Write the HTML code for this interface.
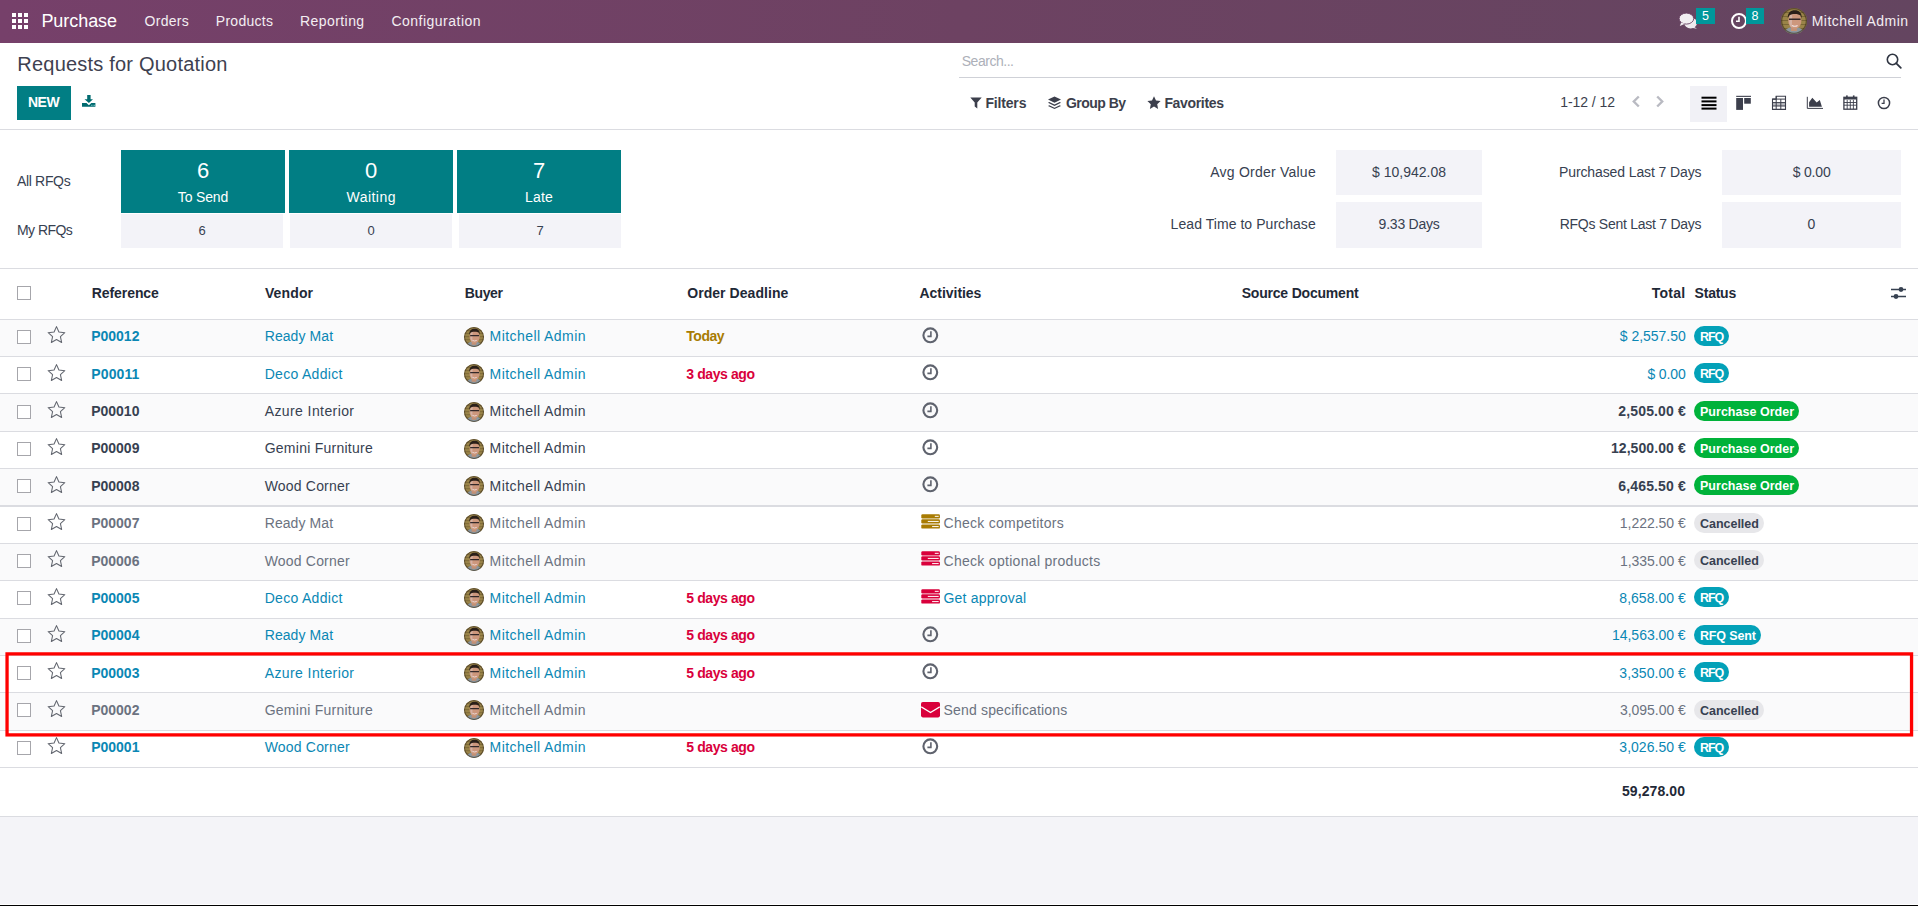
<!DOCTYPE html>
<html><head><meta charset="utf-8"><title>Requests for Quotation</title>
<style>
html,body{margin:0;padding:0;}
body{width:1918px;height:906px;overflow:hidden;position:relative;background:#fff;font-family:"Liberation Sans",sans-serif;}
.t{position:absolute;white-space:nowrap;}
.r{position:absolute;display:block;}
</style></head><body>
<svg width="0" height="0" style="position:absolute">
<defs>
<symbol id="av" viewBox="0 0 26 26">
<clipPath id="avc"><circle cx="13" cy="13" r="13"/></clipPath>
<g clip-path="url(#avc)">
<rect width="26" height="26" fill="#9a8448"/>
<path d="M0 4.5h26M0 8.5h26M0 12.5h26M0 16.5h26M0 20.5h26" stroke="#7b6736" stroke-width="1.1"/>
<path d="M3 26c1-5 4-7 10-7s9 2 10 7z" fill="#8b97a0"/>
<path d="M10 19h6v4h-6z" fill="#c39075"/>
<ellipse cx="13.8" cy="12.6" rx="6.6" ry="8.2" fill="#cd977d"/>
<path d="M8.6 8c0.8-1.5 2-1.8 2.6-1.6l-0.4 13c-1.6-1-2.5-3-2.4-5.5z" fill="#e2d2d4" opacity="0.45"/>
<path d="M6.8 10.2C6.6 4.5 9.8 2.2 13.8 2.2S21 4.5 20.8 10.5L19.6 7.6C17.8 5.6 9.8 5.4 8 7.8z" fill="#2a1f19"/>
<path d="M8 11.2h11.6" stroke="#33282a" stroke-width="1.5"/>
<path d="M11 17.4q2.8 1.6 5.6 0" stroke="#f0e2e2" stroke-width="1.1" fill="none"/>
<circle cx="13" cy="13" r="12.5" fill="none" stroke="#3a2e1e" stroke-width="1.6" opacity="0.6"/>
</g>
</symbol>
</defs></svg>
<div class="r" style="left:0px;top:0px;width:1918px;height:43px;background:linear-gradient(90deg,#76406a 0%,#6d4262 50%,#644560 100%);"></div>
<div class="r" style="left:12px;top:13px;width:4px;height:4px;background:#fff;"></div>
<div class="r" style="left:12px;top:19px;width:4px;height:4px;background:#fff;"></div>
<div class="r" style="left:12px;top:25px;width:4px;height:4px;background:#fff;"></div>
<div class="r" style="left:18px;top:13px;width:4px;height:4px;background:#fff;"></div>
<div class="r" style="left:18px;top:19px;width:4px;height:4px;background:#fff;"></div>
<div class="r" style="left:18px;top:25px;width:4px;height:4px;background:#fff;"></div>
<div class="r" style="left:24px;top:13px;width:4px;height:4px;background:#fff;"></div>
<div class="r" style="left:24px;top:19px;width:4px;height:4px;background:#fff;"></div>
<div class="r" style="left:24px;top:25px;width:4px;height:4px;background:#fff;"></div>
<div class="t" style="top:10px;font-size:18px;line-height:23px;color:#fff;letter-spacing:-0.057px;left:41.40px;">Purchase</div>
<div class="t" style="top:12px;font-size:14px;line-height:18px;color:#f3eef2;letter-spacing:0.250px;left:144.60px;">Orders</div>
<div class="t" style="top:12px;font-size:14px;line-height:18px;color:#f3eef2;letter-spacing:0.279px;left:215.80px;">Products</div>
<div class="t" style="top:12px;font-size:14px;line-height:18px;color:#f3eef2;letter-spacing:0.444px;left:299.90px;">Reporting</div>
<div class="t" style="top:12px;font-size:14px;line-height:18px;color:#f3eef2;letter-spacing:0.496px;left:391.40px;">Configuration</div>
<svg class="r" style="left:1678px;top:12px;" width="20" height="18" viewBox="0 0 20 18"><ellipse cx="12.6" cy="11" rx="6.4" ry="5.4" fill="#eeeaee"/><path d="M15.5 14.5L19 16.8 13.5 15.8z" fill="#eeeaee"/><ellipse cx="8.4" cy="6.6" rx="7.3" ry="5.5" fill="#f1eef1" stroke="#694262" stroke-width="0.9"/><path d="M3.2 10.6L1.8 14 7 11.8z" fill="#f1eef1"/></svg>
<div class="r" style="left:1696px;top:8px;width:19px;height:16px;background:#00979b;"></div>
<div class="t" style="top:8px;font-size:12.5px;line-height:16px;color:#fff;left:1405.50px;width:600px;text-align:center;">5</div>
<svg class="r" style="left:1730px;top:12px;" width="18" height="18" viewBox="0 0 18 18"><circle cx="9" cy="9" r="7" fill="none" stroke="#fff" stroke-width="2"/><path d="M9 4.8V9.3H6" fill="none" stroke="#fff" stroke-width="1.6"/></svg>
<div class="r" style="left:1746px;top:8px;width:18px;height:16px;background:#00979b;"></div>
<div class="t" style="top:8px;font-size:12.5px;line-height:16px;color:#fff;left:1455.00px;width:600px;text-align:center;">8</div>
<svg class="r" style="left:1781px;top:8px" width="26" height="26" viewBox="0 0 26 26"><use href="#av"/></svg>
<div class="t" style="top:12px;font-size:14px;line-height:18px;color:#f3eef2;letter-spacing:0.465px;left:1811.70px;">Mitchell Admin</div>
<div class="t" style="top:51px;font-size:20px;line-height:26px;color:#3e4150;letter-spacing:0.213px;left:17.30px;">Requests for Quotation</div>
<div class="r" style="left:17px;top:86px;width:54px;height:34px;background:#017e84;"></div>
<div class="t" style="top:93px;font-size:14px;line-height:18px;color:#fff;font-weight:700;letter-spacing:-0.525px;left:28.00px;">NEW</div>
<svg class="r" style="left:82px;top:95px;" width="14" height="13" viewBox="0 0 14 13"><path d="M5.2 0h3.4v4.2H11L6.9 8.1 2.5 4.2h2.7z" fill="#016b70"/><path d="M0 8.1h4.5L6.9 10.2 9.3 8.1H13.4V11.7H0z" fill="#016b70"/><rect x="9.2" y="9.8" width="0.9" height="1" fill="#8cc"/><rect x="10.6" y="9.8" width="0.9" height="1" fill="#8cc"/><rect x="12" y="9.8" width="0.9" height="1" fill="#8cc"/></svg>
<div class="t" style="top:52px;font-size:14px;line-height:18px;color:#adb0b9;letter-spacing:-0.463px;left:961.70px;">Search...</div>
<div class="r" style="left:959px;top:77px;width:942px;height:1px;background:#cfd1d7;"></div>
<svg class="r" style="left:1886px;top:53px;" width="16" height="16" viewBox="0 0 16 16"><circle cx="6.5" cy="6.5" r="5.2" fill="none" stroke="#2f3542" stroke-width="1.6"/><path d="M10.3 10.3L14.8 14.8" stroke="#2f3542" stroke-width="1.8" stroke-linecap="round"/></svg>
<svg class="r" style="left:970px;top:97px;" width="12" height="12" viewBox="0 0 12 12"><path d="M0.3 0.5h11.4L7.3 5.5V11.5L4.7 9.6V5.5z" fill="#3c3f4c"/></svg>
<div class="t" style="top:94px;font-size:14px;line-height:18px;color:#3c3f4c;font-weight:700;letter-spacing:-0.183px;left:985.50px;">Filters</div>
<svg class="r" style="left:1047px;top:96px;" width="15" height="14" viewBox="0 0 15 14"><path d="M7.5 0.5L14 3.6 7.5 6.7 1 3.6z" fill="#3c3f4c"/><path d="M2.3 6.1L7.5 8.6l5.2-2.5L14 6.8 7.5 9.9 1 6.8z" fill="#3c3f4c"/><path d="M2.3 9.3L7.5 11.8l5.2-2.5L14 10 7.5 13.1 1 10z" fill="#3c3f4c"/></svg>
<div class="t" style="top:94px;font-size:14px;line-height:18px;color:#3c3f4c;font-weight:700;letter-spacing:-0.536px;left:1066.00px;">Group By</div>
<svg class="r" style="left:1147px;top:96px;" width="14" height="13" viewBox="0 0 14 13"><path d="M7 0.3l2 4.2 4.6.6-3.4 3.2.9 4.6L7 10.6l-4.1 2.3.9-4.6L.4 5.1 5 4.5z" fill="#3c3f4c"/></svg>
<div class="t" style="top:94px;font-size:14px;line-height:18px;color:#3c3f4c;font-weight:700;letter-spacing:-0.331px;left:1164.40px;">Favorites</div>
<div class="t" style="top:93px;font-size:14px;line-height:18px;color:#3c3f4c;letter-spacing:-0.069px;left:1560.30px;">1-12 / 12</div>
<svg class="r" style="left:1631px;top:95px;" width="10" height="13" viewBox="0 0 10 13"><path d="M7.8 1.5L2.8 6.5l5 5" fill="none" stroke="#b9bac2" stroke-width="2.4"/></svg>
<svg class="r" style="left:1655px;top:95px;" width="10" height="13" viewBox="0 0 10 13"><path d="M2.2 1.5l5 5-5 5" fill="none" stroke="#b9bac2" stroke-width="2.4"/></svg>
<div class="r" style="left:1690px;top:86px;width:37px;height:36px;background:#f1f1f6;"></div>
<svg class="r" style="left:1701px;top:96px;" width="16" height="14" viewBox="0 0 16 14"><rect x="0.5" y="0.7" width="15" height="2" fill="#000"/><rect x="0.5" y="4.4" width="15" height="2" fill="#000"/><rect x="0.5" y="8.1" width="15" height="2" fill="#000"/><rect x="0.5" y="11.6" width="15" height="2" fill="#000"/></svg>
<svg class="r" style="left:1736px;top:95px;" width="16" height="15" viewBox="0 0 16 15"><rect x="0.2" y="0.8" width="14.8" height="1.1" fill="#3c3f4c"/><rect x="0.2" y="3" width="6.8" height="11.9" fill="#3c3f4c"/><rect x="8.2" y="3" width="6.6" height="5.7" fill="#3c3f4c"/></svg>
<svg class="r" style="left:1771px;top:95px;" width="16" height="15" viewBox="0 0 16 15"><path d="M1.5 4.1H5.2V1.3H14.5V14.4H1.5Z" fill="none" stroke="#3c3f4c" stroke-width="1.1"/><path d="M1.5 4.1H14.5M1.5 7.6H14.5M1.5 11H14.5M5.2 1.3V14.4M9.8 4.1V14.4" stroke="#3c3f4c" stroke-width="1"/><rect x="1.5" y="7.6" width="13" height="3.4" fill="#3c3f4c" opacity="0.35"/></svg>
<svg class="r" style="left:1806px;top:95px;" width="18" height="15" viewBox="0 0 18 15"><path d="M1.3 1.8V13.4H17" fill="none" stroke="#3c3f4c" stroke-width="1"/><path d="M3.1 11.7V7.3L6.3 2.8 10.7 7.5 13.8 4.9 15.9 11.7Z" fill="#3c3f4c"/></svg>
<svg class="r" style="left:1843px;top:95px;" width="15" height="15" viewBox="0 0 15 15"><rect x="0.9" y="2.3" width="12.8" height="11.9" fill="none" stroke="#3c3f4c" stroke-width="1.3"/><rect x="0.9" y="2.3" width="12.8" height="2.2" fill="#3c3f4c"/><path d="M0.9 7.5h12.8M0.9 10.2h12.8M4.2 4.9v9.3M7.3 4.9v9.3M10.4 4.9v9.3" stroke="#3c3f4c" stroke-width="0.9"/><rect x="3.1" y="0.4" width="1.6" height="3.2" fill="#3c3f4c"/><rect x="9.9" y="0.4" width="1.6" height="3.2" fill="#3c3f4c"/></svg>
<svg class="r" style="left:1877px;top:96px;" width="14" height="14" viewBox="0 0 14 14"><circle cx="7" cy="7" r="5.6" fill="none" stroke="#3c3f4c" stroke-width="1.5"/><path d="M7 3.6V7.4H4.6" fill="none" stroke="#3c3f4c" stroke-width="1.3"/></svg>
<div class="r" style="left:0px;top:129px;width:1918px;height:1px;background:#dbdce1;"></div>
<div class="t" style="top:172px;font-size:14px;line-height:18px;color:#374151;letter-spacing:-0.314px;left:16.90px;">All RFQs</div>
<div class="t" style="top:221px;font-size:14px;line-height:18px;color:#374151;letter-spacing:-0.521px;left:16.90px;">My RFQs</div>
<div class="r" style="left:121px;top:150px;width:164px;height:63px;background:#017e84;"></div>
<div class="t" style="top:156px;font-size:22px;line-height:29px;color:#fff;left:-97.00px;width:600px;text-align:center;">6</div>
<div class="t" style="top:188px;font-size:14px;line-height:18px;color:#fff;letter-spacing:-0.163px;left:177.80px;">To Send</div>
<div class="r" style="left:121px;top:214px;width:162px;height:34px;background:#f3f3f8;"></div>
<div class="t" style="top:222px;font-size:13px;line-height:17px;color:#374151;left:-98.00px;width:600px;text-align:center;">6</div>
<div class="r" style="left:289px;top:150px;width:164px;height:63px;background:#017e84;"></div>
<div class="t" style="top:156px;font-size:22px;line-height:29px;color:#fff;left:71.00px;width:600px;text-align:center;">0</div>
<div class="t" style="top:188px;font-size:14px;line-height:18px;color:#fff;letter-spacing:0.446px;left:346.60px;">Waiting</div>
<div class="r" style="left:290px;top:214px;width:162px;height:34px;background:#f3f3f8;"></div>
<div class="t" style="top:222px;font-size:13px;line-height:17px;color:#374151;left:71.00px;width:600px;text-align:center;">0</div>
<div class="r" style="left:457px;top:150px;width:164px;height:63px;background:#017e84;"></div>
<div class="t" style="top:156px;font-size:22px;line-height:29px;color:#fff;left:239.00px;width:600px;text-align:center;">7</div>
<div class="t" style="top:188px;font-size:14px;line-height:18px;color:#fff;letter-spacing:0.183px;left:525.10px;">Late</div>
<div class="r" style="left:459px;top:214px;width:162px;height:34px;background:#f3f3f8;"></div>
<div class="t" style="top:222px;font-size:13px;line-height:17px;color:#374151;left:240.00px;width:600px;text-align:center;">7</div>
<div class="t" style="top:163px;font-size:14px;line-height:18px;color:#374151;letter-spacing:0.232px;right:602.10px;text-align:right;">Avg Order Value</div>
<div class="t" style="top:215px;font-size:14px;line-height:18px;color:#374151;letter-spacing:0.055px;right:602.26px;text-align:right;">Lead Time to Purchase</div>
<div class="r" style="left:1336px;top:150px;width:146px;height:45px;background:#f3f3f8;"></div>
<div class="r" style="left:1336px;top:202px;width:146px;height:46px;background:#f3f3f8;"></div>
<div class="t" style="top:163px;font-size:14px;line-height:18px;color:#374151;letter-spacing:0.000px;left:1372.00px;">$ 10,942.08</div>
<div class="t" style="top:215px;font-size:14px;line-height:18px;color:#374151;letter-spacing:-0.225px;left:1378.60px;">9.33 Days</div>
<div class="t" style="top:163px;font-size:14px;line-height:18px;color:#374151;letter-spacing:-0.108px;right:216.50px;text-align:right;">Purchased Last 7 Days</div>
<div class="t" style="top:215px;font-size:14px;line-height:18px;color:#374151;letter-spacing:-0.261px;right:216.72px;text-align:right;">RFQs Sent Last 7 Days</div>
<div class="r" style="left:1722px;top:150px;width:179px;height:45px;background:#f3f3f8;"></div>
<div class="r" style="left:1722px;top:202px;width:179px;height:46px;background:#f3f3f8;"></div>
<div class="t" style="top:163px;font-size:14px;line-height:18px;color:#374151;letter-spacing:-0.175px;left:1792.70px;">$ 0.00</div>
<div class="t" style="top:215px;font-size:14px;line-height:18px;color:#374151;left:1511.50px;width:600px;text-align:center;">0</div>
<div class="r" style="left:0px;top:268px;width:1918px;height:1px;background:#dbdce1;"></div>
<div class="r" style="left:17px;top:286px;width:14px;height:14px;background:#fff;box-sizing:border-box;border:1px solid #a6a6ab;"></div>
<div class="t" style="top:284px;font-size:14px;line-height:18px;color:#1f2937;font-weight:700;letter-spacing:-0.081px;left:91.80px;">Reference</div>
<div class="t" style="top:284px;font-size:14px;line-height:18px;color:#1f2937;font-weight:700;letter-spacing:0.140px;left:264.90px;">Vendor</div>
<div class="t" style="top:284px;font-size:14px;line-height:18px;color:#1f2937;font-weight:700;letter-spacing:-0.412px;left:464.80px;">Buyer</div>
<div class="t" style="top:284px;font-size:14px;line-height:18px;color:#1f2937;font-weight:700;letter-spacing:0.063px;left:687.20px;">Order Deadline</div>
<div class="t" style="top:284px;font-size:14px;line-height:18px;color:#1f2937;font-weight:700;letter-spacing:-0.039px;left:919.50px;">Activities</div>
<div class="t" style="top:284px;font-size:14px;line-height:18px;color:#1f2937;font-weight:700;letter-spacing:-0.198px;left:1241.70px;">Source Document</div>
<div class="t" style="top:284px;font-size:14px;line-height:18px;color:#1f2937;font-weight:700;letter-spacing:-0.230px;left:1694.60px;">Status</div>
<div class="t" style="top:284px;font-size:14px;line-height:18px;color:#1f2937;font-weight:700;letter-spacing:0.206px;right:232.76px;text-align:right;">Total</div>
<svg class="r" style="left:1890px;top:286px;" width="17" height="14" viewBox="0 0 17 14"><path d="M1 3.5h15M1 10.5h15" stroke="#374151" stroke-width="1.3"/><circle cx="11" cy="3.5" r="2.4" fill="#374151"/><circle cx="6" cy="10.5" r="2.4" fill="#374151"/></svg>
<div class="r" style="left:0px;top:319px;width:1918px;height:1px;background:#dbdce1;"></div>
<div class="r" style="left:0px;top:320px;width:1918px;height:36px;background:#fafafb;"></div>
<div class="r" style="left:0px;top:356px;width:1918px;height:1px;background:#dbdce1;"></div>
<div class="r" style="left:17px;top:330px;width:14px;height:14px;background:#fff;box-sizing:border-box;border:1px solid #a6a6ab;"></div>
<svg class="r" style="left:46.5px;top:326px;" width="19" height="18" viewBox="0 0 19 18"><polygon points="9.50,0.60 11.92,6.02 17.82,6.65 13.41,10.62 14.64,16.43 9.50,13.46 4.36,16.43 5.59,10.62 1.18,6.65 7.08,6.02" fill="none" stroke="#62666f" stroke-width="1.05" stroke-linejoin="round"/></svg>
<div class="t" style="top:327px;font-size:14px;line-height:18px;color:#0a87b4;font-weight:700;letter-spacing:-0.030px;left:91.30px;">P00012</div>
<div class="t" style="top:327px;font-size:14px;line-height:18px;color:#0a87b4;letter-spacing:0.081px;left:264.70px;">Ready Mat</div>
<svg class="r" style="left:464px;top:327px" width="20" height="20" viewBox="0 0 26 26"><use href="#av"/></svg>
<div class="t" style="top:327px;font-size:14px;line-height:18px;color:#0a87b4;letter-spacing:0.435px;left:489.60px;">Mitchell Admin</div>
<div class="t" style="top:327px;font-size:14px;line-height:18px;color:#a87b02;font-weight:700;letter-spacing:-0.463px;left:686.30px;">Today</div>
<svg class="r" style="left:922.2px;top:327px;" width="17" height="17" viewBox="0 0 17 17"><circle cx="8.3" cy="8.3" r="6.9" fill="none" stroke="#5f636e" stroke-width="2.1"/><path d="M8.9 4.3V9.4H5.4" fill="none" stroke="#5f636e" stroke-width="1.6"/></svg>
<div class="t" style="top:327px;font-size:14px;line-height:18px;color:#0a87b4;letter-spacing:-0.025px;right:232.27px;text-align:right;">$ 2,557.50</div>
<div class="r" style="left:1694px;top:326px;width:35px;height:20px;background:#03a1b8;border-radius:10px;"></div>
<div class="t" style="top:329px;font-size:12.5px;line-height:16px;color:#fff;font-weight:700;letter-spacing:-1.088px;left:1700.00px;">RFQ</div>
<div class="r" style="left:0px;top:393px;width:1918px;height:1px;background:#dbdce1;"></div>
<div class="r" style="left:17px;top:367px;width:14px;height:14px;background:#fff;box-sizing:border-box;border:1px solid #a6a6ab;"></div>
<svg class="r" style="left:46.5px;top:364px;" width="19" height="18" viewBox="0 0 19 18"><polygon points="9.50,0.60 11.92,6.02 17.82,6.65 13.41,10.62 14.64,16.43 9.50,13.46 4.36,16.43 5.59,10.62 1.18,6.65 7.08,6.02" fill="none" stroke="#62666f" stroke-width="1.05" stroke-linejoin="round"/></svg>
<div class="t" style="top:365px;font-size:14px;line-height:18px;color:#0a87b4;font-weight:700;letter-spacing:0.120px;left:91.30px;">P00011</div>
<div class="t" style="top:365px;font-size:14px;line-height:18px;color:#0a87b4;letter-spacing:0.295px;left:264.70px;">Deco Addict</div>
<svg class="r" style="left:464px;top:364px" width="20" height="20" viewBox="0 0 26 26"><use href="#av"/></svg>
<div class="t" style="top:365px;font-size:14px;line-height:18px;color:#0a87b4;letter-spacing:0.435px;left:489.60px;">Mitchell Admin</div>
<div class="t" style="top:365px;font-size:14px;line-height:18px;color:#d9003b;font-weight:700;letter-spacing:-0.408px;left:686.30px;">3 days ago</div>
<svg class="r" style="left:922.2px;top:364px;" width="17" height="17" viewBox="0 0 17 17"><circle cx="8.3" cy="8.3" r="6.9" fill="none" stroke="#5f636e" stroke-width="2.1"/><path d="M8.9 4.3V9.4H5.4" fill="none" stroke="#5f636e" stroke-width="1.6"/></svg>
<div class="t" style="top:365px;font-size:14px;line-height:18px;color:#0a87b4;letter-spacing:-0.115px;right:232.36px;text-align:right;">$ 0.00</div>
<div class="r" style="left:1694px;top:363px;width:35px;height:20px;background:#03a1b8;border-radius:10px;"></div>
<div class="t" style="top:366px;font-size:12.5px;line-height:16px;color:#fff;font-weight:700;letter-spacing:-1.088px;left:1700.00px;">RFQ</div>
<div class="r" style="left:0px;top:394px;width:1918px;height:37px;background:#fafafb;"></div>
<div class="r" style="left:0px;top:431px;width:1918px;height:1px;background:#dbdce1;"></div>
<div class="r" style="left:17px;top:405px;width:14px;height:14px;background:#fff;box-sizing:border-box;border:1px solid #a6a6ab;"></div>
<svg class="r" style="left:46.5px;top:401px;" width="19" height="18" viewBox="0 0 19 18"><polygon points="9.50,0.60 11.92,6.02 17.82,6.65 13.41,10.62 14.64,16.43 9.50,13.46 4.36,16.43 5.59,10.62 1.18,6.65 7.08,6.02" fill="none" stroke="#62666f" stroke-width="1.05" stroke-linejoin="round"/></svg>
<div class="t" style="top:402px;font-size:14px;line-height:18px;color:#374151;font-weight:700;letter-spacing:-0.030px;left:91.30px;">P00010</div>
<div class="t" style="top:402px;font-size:14px;line-height:18px;color:#374151;letter-spacing:0.408px;left:264.70px;">Azure Interior</div>
<svg class="r" style="left:464px;top:402px" width="20" height="20" viewBox="0 0 26 26"><use href="#av"/></svg>
<div class="t" style="top:402px;font-size:14px;line-height:18px;color:#374151;letter-spacing:0.435px;left:489.60px;">Mitchell Admin</div>
<svg class="r" style="left:922.2px;top:402px;" width="17" height="17" viewBox="0 0 17 17"><circle cx="8.3" cy="8.3" r="6.9" fill="none" stroke="#5f636e" stroke-width="2.1"/><path d="M8.9 4.3V9.4H5.4" fill="none" stroke="#5f636e" stroke-width="1.6"/></svg>
<div class="t" style="top:402px;font-size:14px;line-height:18px;color:#374151;font-weight:700;letter-spacing:0.142px;right:232.10px;text-align:right;">2,505.00 €</div>
<div class="r" style="left:1694px;top:401px;width:105px;height:20px;background:#00b23a;border-radius:10px;"></div>
<div class="t" style="top:404px;font-size:12.5px;line-height:16px;color:#fff;font-weight:700;letter-spacing:0.019px;left:1700.00px;">Purchase Order</div>
<div class="r" style="left:0px;top:468px;width:1918px;height:1px;background:#dbdce1;"></div>
<div class="r" style="left:17px;top:442px;width:14px;height:14px;background:#fff;box-sizing:border-box;border:1px solid #a6a6ab;"></div>
<svg class="r" style="left:46.5px;top:438px;" width="19" height="18" viewBox="0 0 19 18"><polygon points="9.50,0.60 11.92,6.02 17.82,6.65 13.41,10.62 14.64,16.43 9.50,13.46 4.36,16.43 5.59,10.62 1.18,6.65 7.08,6.02" fill="none" stroke="#62666f" stroke-width="1.05" stroke-linejoin="round"/></svg>
<div class="t" style="top:439px;font-size:14px;line-height:18px;color:#374151;font-weight:700;letter-spacing:-0.030px;left:91.30px;">P00009</div>
<div class="t" style="top:439px;font-size:14px;line-height:18px;color:#374151;letter-spacing:0.250px;left:264.70px;">Gemini Furniture</div>
<svg class="r" style="left:464px;top:439px" width="20" height="20" viewBox="0 0 26 26"><use href="#av"/></svg>
<div class="t" style="top:439px;font-size:14px;line-height:18px;color:#374151;letter-spacing:0.435px;left:489.60px;">Mitchell Admin</div>
<svg class="r" style="left:922.2px;top:439px;" width="17" height="17" viewBox="0 0 17 17"><circle cx="8.3" cy="8.3" r="6.9" fill="none" stroke="#5f636e" stroke-width="2.1"/><path d="M8.9 4.3V9.4H5.4" fill="none" stroke="#5f636e" stroke-width="1.6"/></svg>
<div class="t" style="top:439px;font-size:14px;line-height:18px;color:#374151;font-weight:700;letter-spacing:0.080px;right:232.25px;text-align:right;">12,500.00 €</div>
<div class="r" style="left:1694px;top:438px;width:105px;height:20px;background:#00b23a;border-radius:10px;"></div>
<div class="t" style="top:441px;font-size:12.5px;line-height:16px;color:#fff;font-weight:700;letter-spacing:0.019px;left:1700.00px;">Purchase Order</div>
<div class="r" style="left:0px;top:469px;width:1918px;height:36px;background:#fafafb;"></div>
<div class="r" style="left:0px;top:505px;width:1918px;height:2px;background:#dbdce1;"></div>
<div class="r" style="left:17px;top:479px;width:14px;height:14px;background:#fff;box-sizing:border-box;border:1px solid #a6a6ab;"></div>
<svg class="r" style="left:46.5px;top:476px;" width="19" height="18" viewBox="0 0 19 18"><polygon points="9.50,0.60 11.92,6.02 17.82,6.65 13.41,10.62 14.64,16.43 9.50,13.46 4.36,16.43 5.59,10.62 1.18,6.65 7.08,6.02" fill="none" stroke="#62666f" stroke-width="1.05" stroke-linejoin="round"/></svg>
<div class="t" style="top:477px;font-size:14px;line-height:18px;color:#374151;font-weight:700;letter-spacing:-0.030px;left:91.30px;">P00008</div>
<div class="t" style="top:477px;font-size:14px;line-height:18px;color:#374151;letter-spacing:0.190px;left:264.70px;">Wood Corner</div>
<svg class="r" style="left:464px;top:476px" width="20" height="20" viewBox="0 0 26 26"><use href="#av"/></svg>
<div class="t" style="top:477px;font-size:14px;line-height:18px;color:#374151;letter-spacing:0.435px;left:489.60px;">Mitchell Admin</div>
<svg class="r" style="left:922.2px;top:476px;" width="17" height="17" viewBox="0 0 17 17"><circle cx="8.3" cy="8.3" r="6.9" fill="none" stroke="#5f636e" stroke-width="2.1"/><path d="M8.9 4.3V9.4H5.4" fill="none" stroke="#5f636e" stroke-width="1.6"/></svg>
<div class="t" style="top:477px;font-size:14px;line-height:18px;color:#374151;font-weight:700;letter-spacing:0.142px;right:232.10px;text-align:right;">6,465.50 €</div>
<div class="r" style="left:1694px;top:475px;width:105px;height:20px;background:#00b23a;border-radius:10px;"></div>
<div class="t" style="top:478px;font-size:12.5px;line-height:16px;color:#fff;font-weight:700;letter-spacing:0.019px;left:1700.00px;">Purchase Order</div>
<div class="r" style="left:0px;top:543px;width:1918px;height:1px;background:#dbdce1;"></div>
<div class="r" style="left:17px;top:517px;width:14px;height:14px;background:#fff;box-sizing:border-box;border:1px solid #a6a6ab;"></div>
<svg class="r" style="left:46.5px;top:513px;" width="19" height="18" viewBox="0 0 19 18"><polygon points="9.50,0.60 11.92,6.02 17.82,6.65 13.41,10.62 14.64,16.43 9.50,13.46 4.36,16.43 5.59,10.62 1.18,6.65 7.08,6.02" fill="none" stroke="#62666f" stroke-width="1.05" stroke-linejoin="round"/></svg>
<div class="t" style="top:514px;font-size:14px;line-height:18px;color:#6b7280;font-weight:700;letter-spacing:-0.030px;left:91.30px;">P00007</div>
<div class="t" style="top:514px;font-size:14px;line-height:18px;color:#6b7280;letter-spacing:0.081px;left:264.70px;">Ready Mat</div>
<svg class="r" style="left:464px;top:514px" width="20" height="20" viewBox="0 0 26 26"><use href="#av"/></svg>
<div class="t" style="top:514px;font-size:14px;line-height:18px;color:#6b7280;letter-spacing:0.435px;left:489.60px;">Mitchell Admin</div>
<svg class="r" style="left:921px;top:514px;" width="19" height="16" viewBox="0 0 19 16"><rect x="0.3" y="0.2" width="18.6" height="4.2" rx="1.2" fill="#a87b02"/><rect x="13.8" y="1.8" width="3.9000000000000012" height="1.1" fill="#fff" opacity="0.9"/><rect x="0.3" y="5.3" width="18.6" height="4.2" rx="1.2" fill="#a87b02"/><rect x="6.8" y="6.9" width="10.900000000000002" height="1.1" fill="#fff" opacity="0.9"/><rect x="0.3" y="10.399999999999999" width="18.6" height="4.2" rx="1.2" fill="#a87b02"/><rect x="11.100000000000001" y="11.999999999999998" width="6.6000000000000005" height="1.1" fill="#fff" opacity="0.9"/></svg>
<div class="t" style="top:514px;font-size:14px;line-height:18px;color:#6b7280;letter-spacing:0.269px;left:943.50px;">Check competitors</div>
<div class="t" style="top:514px;font-size:14px;line-height:18px;color:#6b7280;letter-spacing:-0.025px;right:232.27px;text-align:right;">1,222.50 €</div>
<div class="r" style="left:1694px;top:513px;width:70px;height:20px;background:#e7e7ea;border-radius:10px;"></div>
<div class="t" style="top:516px;font-size:12.5px;line-height:16px;color:#374151;font-weight:700;letter-spacing:-0.025px;left:1700.00px;">Cancelled</div>
<div class="r" style="left:0px;top:544px;width:1918px;height:36px;background:#fafafb;"></div>
<div class="r" style="left:0px;top:580px;width:1918px;height:1px;background:#dbdce1;"></div>
<div class="r" style="left:17px;top:554px;width:14px;height:14px;background:#fff;box-sizing:border-box;border:1px solid #a6a6ab;"></div>
<svg class="r" style="left:46.5px;top:550px;" width="19" height="18" viewBox="0 0 19 18"><polygon points="9.50,0.60 11.92,6.02 17.82,6.65 13.41,10.62 14.64,16.43 9.50,13.46 4.36,16.43 5.59,10.62 1.18,6.65 7.08,6.02" fill="none" stroke="#62666f" stroke-width="1.05" stroke-linejoin="round"/></svg>
<div class="t" style="top:552px;font-size:14px;line-height:18px;color:#6b7280;font-weight:700;letter-spacing:-0.030px;left:91.30px;">P00006</div>
<div class="t" style="top:552px;font-size:14px;line-height:18px;color:#6b7280;letter-spacing:0.190px;left:264.70px;">Wood Corner</div>
<svg class="r" style="left:464px;top:551px" width="20" height="20" viewBox="0 0 26 26"><use href="#av"/></svg>
<div class="t" style="top:552px;font-size:14px;line-height:18px;color:#6b7280;letter-spacing:0.435px;left:489.60px;">Mitchell Admin</div>
<svg class="r" style="left:921px;top:551px;" width="19" height="16" viewBox="0 0 19 16"><rect x="0.3" y="0.2" width="18.6" height="4.2" rx="1.2" fill="#d9003b"/><rect x="13.8" y="1.8" width="3.9000000000000012" height="1.1" fill="#fff" opacity="0.9"/><rect x="0.3" y="5.3" width="18.6" height="4.2" rx="1.2" fill="#d9003b"/><rect x="6.8" y="6.9" width="10.900000000000002" height="1.1" fill="#fff" opacity="0.9"/><rect x="0.3" y="10.399999999999999" width="18.6" height="4.2" rx="1.2" fill="#d9003b"/><rect x="11.100000000000001" y="11.999999999999998" width="6.6000000000000005" height="1.1" fill="#fff" opacity="0.9"/></svg>
<div class="t" style="top:552px;font-size:14px;line-height:18px;color:#6b7280;letter-spacing:0.298px;left:943.50px;">Check optional products</div>
<div class="t" style="top:552px;font-size:14px;line-height:18px;color:#6b7280;letter-spacing:-0.036px;right:232.28px;text-align:right;">1,335.00 €</div>
<div class="r" style="left:1694px;top:550px;width:70px;height:20px;background:#e7e7ea;border-radius:10px;"></div>
<div class="t" style="top:553px;font-size:12.5px;line-height:16px;color:#374151;font-weight:700;letter-spacing:-0.025px;left:1700.00px;">Cancelled</div>
<div class="r" style="left:0px;top:618px;width:1918px;height:1px;background:#dbdce1;"></div>
<div class="r" style="left:17px;top:591px;width:14px;height:14px;background:#fff;box-sizing:border-box;border:1px solid #a6a6ab;"></div>
<svg class="r" style="left:46.5px;top:588px;" width="19" height="18" viewBox="0 0 19 18"><polygon points="9.50,0.60 11.92,6.02 17.82,6.65 13.41,10.62 14.64,16.43 9.50,13.46 4.36,16.43 5.59,10.62 1.18,6.65 7.08,6.02" fill="none" stroke="#62666f" stroke-width="1.05" stroke-linejoin="round"/></svg>
<div class="t" style="top:589px;font-size:14px;line-height:18px;color:#0a87b4;font-weight:700;letter-spacing:-0.030px;left:91.30px;">P00005</div>
<div class="t" style="top:589px;font-size:14px;line-height:18px;color:#0a87b4;letter-spacing:0.295px;left:264.70px;">Deco Addict</div>
<svg class="r" style="left:464px;top:588px" width="20" height="20" viewBox="0 0 26 26"><use href="#av"/></svg>
<div class="t" style="top:589px;font-size:14px;line-height:18px;color:#0a87b4;letter-spacing:0.435px;left:489.60px;">Mitchell Admin</div>
<div class="t" style="top:589px;font-size:14px;line-height:18px;color:#d9003b;font-weight:700;letter-spacing:-0.408px;left:686.30px;">5 days ago</div>
<svg class="r" style="left:921px;top:589px;" width="19" height="16" viewBox="0 0 19 16"><rect x="0.3" y="0.2" width="18.6" height="4.2" rx="1.2" fill="#d9003b"/><rect x="13.8" y="1.8" width="3.9000000000000012" height="1.1" fill="#fff" opacity="0.9"/><rect x="0.3" y="5.3" width="18.6" height="4.2" rx="1.2" fill="#d9003b"/><rect x="6.8" y="6.9" width="10.900000000000002" height="1.1" fill="#fff" opacity="0.9"/><rect x="0.3" y="10.399999999999999" width="18.6" height="4.2" rx="1.2" fill="#d9003b"/><rect x="11.100000000000001" y="11.999999999999998" width="6.6000000000000005" height="1.1" fill="#fff" opacity="0.9"/></svg>
<div class="t" style="top:589px;font-size:14px;line-height:18px;color:#0a87b4;letter-spacing:0.216px;left:943.50px;">Get approval</div>
<div class="t" style="top:589px;font-size:14px;line-height:18px;color:#0a87b4;letter-spacing:0.031px;right:232.21px;text-align:right;">8,658.00 €</div>
<div class="r" style="left:1694px;top:587px;width:35px;height:20px;background:#03a1b8;border-radius:10px;"></div>
<div class="t" style="top:590px;font-size:12.5px;line-height:16px;color:#fff;font-weight:700;letter-spacing:-1.088px;left:1700.00px;">RFQ</div>
<div class="r" style="left:0px;top:619px;width:1918px;height:36px;background:#fafafb;"></div>
<div class="r" style="left:0px;top:655px;width:1918px;height:1px;background:#dbdce1;"></div>
<div class="r" style="left:17px;top:629px;width:14px;height:14px;background:#fff;box-sizing:border-box;border:1px solid #a6a6ab;"></div>
<svg class="r" style="left:46.5px;top:625px;" width="19" height="18" viewBox="0 0 19 18"><polygon points="9.50,0.60 11.92,6.02 17.82,6.65 13.41,10.62 14.64,16.43 9.50,13.46 4.36,16.43 5.59,10.62 1.18,6.65 7.08,6.02" fill="none" stroke="#62666f" stroke-width="1.05" stroke-linejoin="round"/></svg>
<div class="t" style="top:626px;font-size:14px;line-height:18px;color:#0a87b4;font-weight:700;letter-spacing:-0.030px;left:91.30px;">P00004</div>
<div class="t" style="top:626px;font-size:14px;line-height:18px;color:#0a87b4;letter-spacing:0.081px;left:264.70px;">Ready Mat</div>
<svg class="r" style="left:464px;top:626px" width="20" height="20" viewBox="0 0 26 26"><use href="#av"/></svg>
<div class="t" style="top:626px;font-size:14px;line-height:18px;color:#0a87b4;letter-spacing:0.435px;left:489.60px;">Mitchell Admin</div>
<div class="t" style="top:626px;font-size:14px;line-height:18px;color:#d9003b;font-weight:700;letter-spacing:-0.408px;left:686.30px;">5 days ago</div>
<svg class="r" style="left:922.2px;top:626px;" width="17" height="17" viewBox="0 0 17 17"><circle cx="8.3" cy="8.3" r="6.9" fill="none" stroke="#5f636e" stroke-width="2.1"/><path d="M8.9 4.3V9.4H5.4" fill="none" stroke="#5f636e" stroke-width="1.6"/></svg>
<div class="t" style="top:626px;font-size:14px;line-height:18px;color:#0a87b4;letter-spacing:-0.030px;right:232.36px;text-align:right;">14,563.00 €</div>
<div class="r" style="left:1694px;top:625px;width:67px;height:20px;background:#03a1b8;border-radius:10px;"></div>
<div class="t" style="top:628px;font-size:12.5px;line-height:16px;color:#fff;font-weight:700;letter-spacing:-0.157px;left:1700.00px;">RFQ Sent</div>
<div class="r" style="left:0px;top:692px;width:1918px;height:1px;background:#dbdce1;"></div>
<div class="r" style="left:17px;top:666px;width:14px;height:14px;background:#fff;box-sizing:border-box;border:1px solid #a6a6ab;"></div>
<svg class="r" style="left:46.5px;top:662px;" width="19" height="18" viewBox="0 0 19 18"><polygon points="9.50,0.60 11.92,6.02 17.82,6.65 13.41,10.62 14.64,16.43 9.50,13.46 4.36,16.43 5.59,10.62 1.18,6.65 7.08,6.02" fill="none" stroke="#62666f" stroke-width="1.05" stroke-linejoin="round"/></svg>
<div class="t" style="top:664px;font-size:14px;line-height:18px;color:#0a87b4;font-weight:700;letter-spacing:-0.030px;left:91.30px;">P00003</div>
<div class="t" style="top:664px;font-size:14px;line-height:18px;color:#0a87b4;letter-spacing:0.408px;left:264.70px;">Azure Interior</div>
<svg class="r" style="left:464px;top:663px" width="20" height="20" viewBox="0 0 26 26"><use href="#av"/></svg>
<div class="t" style="top:664px;font-size:14px;line-height:18px;color:#0a87b4;letter-spacing:0.435px;left:489.60px;">Mitchell Admin</div>
<div class="t" style="top:664px;font-size:14px;line-height:18px;color:#d9003b;font-weight:700;letter-spacing:-0.408px;left:686.30px;">5 days ago</div>
<svg class="r" style="left:922.2px;top:663px;" width="17" height="17" viewBox="0 0 17 17"><circle cx="8.3" cy="8.3" r="6.9" fill="none" stroke="#5f636e" stroke-width="2.1"/><path d="M8.9 4.3V9.4H5.4" fill="none" stroke="#5f636e" stroke-width="1.6"/></svg>
<div class="t" style="top:664px;font-size:14px;line-height:18px;color:#0a87b4;letter-spacing:0.031px;right:232.21px;text-align:right;">3,350.00 €</div>
<div class="r" style="left:1694px;top:662px;width:35px;height:20px;background:#03a1b8;border-radius:10px;"></div>
<div class="t" style="top:665px;font-size:12.5px;line-height:16px;color:#fff;font-weight:700;letter-spacing:-1.088px;left:1700.00px;">RFQ</div>
<div class="r" style="left:0px;top:693px;width:1918px;height:37px;background:#fafafb;"></div>
<div class="r" style="left:0px;top:730px;width:1918px;height:1px;background:#dbdce1;"></div>
<div class="r" style="left:17px;top:703px;width:14px;height:14px;background:#fff;box-sizing:border-box;border:1px solid #a6a6ab;"></div>
<svg class="r" style="left:46.5px;top:700px;" width="19" height="18" viewBox="0 0 19 18"><polygon points="9.50,0.60 11.92,6.02 17.82,6.65 13.41,10.62 14.64,16.43 9.50,13.46 4.36,16.43 5.59,10.62 1.18,6.65 7.08,6.02" fill="none" stroke="#62666f" stroke-width="1.05" stroke-linejoin="round"/></svg>
<div class="t" style="top:701px;font-size:14px;line-height:18px;color:#6b7280;font-weight:700;letter-spacing:-0.030px;left:91.30px;">P00002</div>
<div class="t" style="top:701px;font-size:14px;line-height:18px;color:#6b7280;letter-spacing:0.250px;left:264.70px;">Gemini Furniture</div>
<svg class="r" style="left:464px;top:700px" width="20" height="20" viewBox="0 0 26 26"><use href="#av"/></svg>
<div class="t" style="top:701px;font-size:14px;line-height:18px;color:#6b7280;letter-spacing:0.435px;left:489.60px;">Mitchell Admin</div>
<svg class="r" style="left:921px;top:702px;" width="19" height="16" viewBox="0 0 19 16"><rect x="0" y="0" width="19" height="15.4" rx="1.8" fill="#d9003b"/><path d="M0.2 4.9L9.5 10.6 18.8 4.9" fill="none" stroke="#fff" stroke-width="1.3"/></svg>
<div class="t" style="top:701px;font-size:14px;line-height:18px;color:#6b7280;letter-spacing:0.176px;left:943.50px;">Send specifications</div>
<div class="t" style="top:701px;font-size:14px;line-height:18px;color:#6b7280;letter-spacing:-0.036px;right:232.28px;text-align:right;">3,095.00 €</div>
<div class="r" style="left:1694px;top:700px;width:70px;height:20px;background:#e7e7ea;border-radius:10px;"></div>
<div class="t" style="top:703px;font-size:12.5px;line-height:16px;color:#374151;font-weight:700;letter-spacing:-0.025px;left:1700.00px;">Cancelled</div>
<div class="r" style="left:0px;top:767px;width:1918px;height:1px;background:#dbdce1;"></div>
<div class="r" style="left:17px;top:741px;width:14px;height:14px;background:#fff;box-sizing:border-box;border:1px solid #a6a6ab;"></div>
<svg class="r" style="left:46.5px;top:737px;" width="19" height="18" viewBox="0 0 19 18"><polygon points="9.50,0.60 11.92,6.02 17.82,6.65 13.41,10.62 14.64,16.43 9.50,13.46 4.36,16.43 5.59,10.62 1.18,6.65 7.08,6.02" fill="none" stroke="#62666f" stroke-width="1.05" stroke-linejoin="round"/></svg>
<div class="t" style="top:738px;font-size:14px;line-height:18px;color:#0a87b4;font-weight:700;letter-spacing:-0.030px;left:91.30px;">P00001</div>
<div class="t" style="top:738px;font-size:14px;line-height:18px;color:#0a87b4;letter-spacing:0.190px;left:264.70px;">Wood Corner</div>
<svg class="r" style="left:464px;top:738px" width="20" height="20" viewBox="0 0 26 26"><use href="#av"/></svg>
<div class="t" style="top:738px;font-size:14px;line-height:18px;color:#0a87b4;letter-spacing:0.435px;left:489.60px;">Mitchell Admin</div>
<div class="t" style="top:738px;font-size:14px;line-height:18px;color:#d9003b;font-weight:700;letter-spacing:-0.408px;left:686.30px;">5 days ago</div>
<svg class="r" style="left:922.2px;top:738px;" width="17" height="17" viewBox="0 0 17 17"><circle cx="8.3" cy="8.3" r="6.9" fill="none" stroke="#5f636e" stroke-width="2.1"/><path d="M8.9 4.3V9.4H5.4" fill="none" stroke="#5f636e" stroke-width="1.6"/></svg>
<div class="t" style="top:738px;font-size:14px;line-height:18px;color:#0a87b4;letter-spacing:0.031px;right:232.21px;text-align:right;">3,026.50 €</div>
<div class="r" style="left:1694px;top:737px;width:35px;height:20px;background:#03a1b8;border-radius:10px;"></div>
<div class="t" style="top:740px;font-size:12.5px;line-height:16px;color:#fff;font-weight:700;letter-spacing:-1.088px;left:1700.00px;">RFQ</div>
<div class="t" style="top:782px;font-size:14px;line-height:18px;color:#1f2937;font-weight:700;letter-spacing:0.106px;right:232.85px;text-align:right;">59,278.00</div>
<div class="r" style="left:0px;top:816px;width:1918px;height:1px;background:#dbdce1;"></div>
<div class="r" style="left:0px;top:817px;width:1918px;height:87px;background:#f4f4f8;"></div>
<div class="r" style="left:0px;top:905px;width:1918px;height:1px;background:#000;"></div>
<svg class="r" style="left:0;top:0" width="1918" height="906"><rect x="7.05" y="653.9" width="1904.5" height="81" fill="none" stroke="#ff0000" stroke-width="3.3"/></svg>
</body></html>
